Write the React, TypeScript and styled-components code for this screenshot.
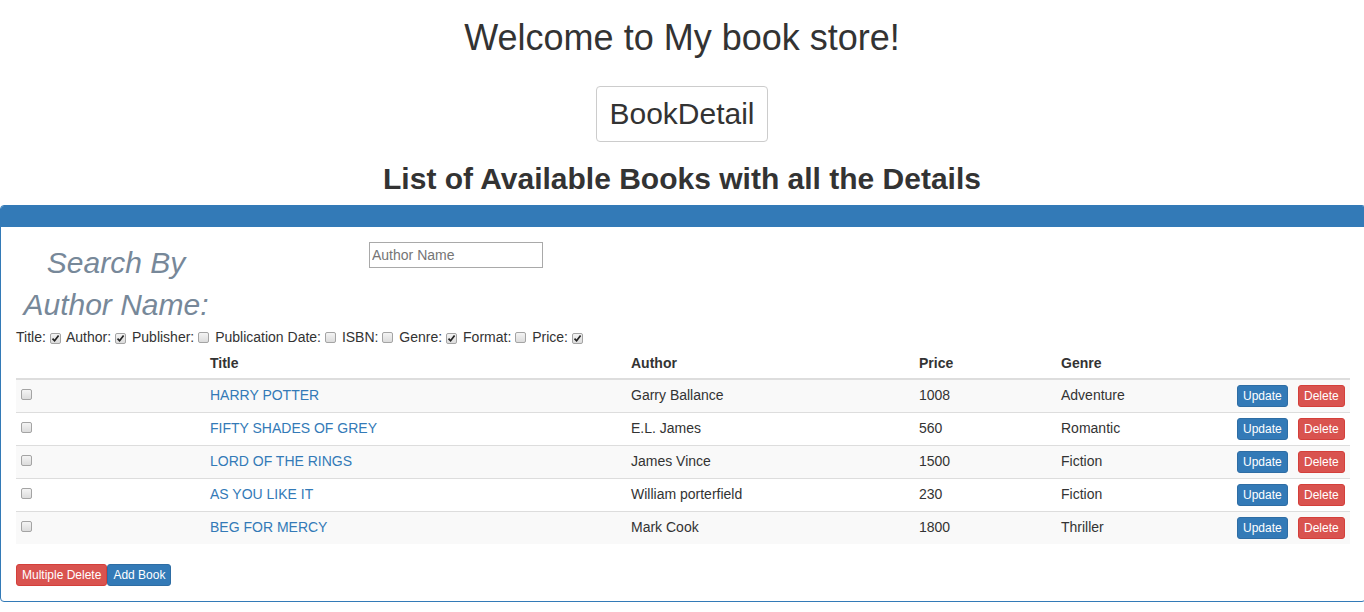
import styled, { createGlobalStyle } from 'styled-components';

const GlobalStyle = createGlobalStyle`
  html, body {
    margin: 0;
    padding: 0;
    overflow-x: hidden;
    background: #fff;
  }
  body {
    font-family: "Liberation Sans", Arial, Helvetica, sans-serif;
    font-size: 14px;
    line-height: 1.42857;
    color: #333;
  }
  * {
    box-sizing: border-box;
  }
`;

const Page = styled.div`
  text-align: center;
`;

const Heading = styled.h1`
  font-size: 36px;
  font-weight: 400;
  line-height: 1.1;
  margin: 18px 0 28px;
`;

const DetailButton = styled.button`
  font-family: inherit;
  font-size: 30px;
  line-height: 34px;
  padding: 10px 12px;
  color: #333;
  background: #fff;
  border: 1px solid #ccc;
  border-radius: 4px;
  cursor: pointer;
`;

const SubHeading = styled.h2`
  font-size: 30px;
  font-weight: 700;
  line-height: 1.1;
  margin: 20px 0 10px;
`;

const Panel = styled.div`
  text-align: left;
  margin: 0 -2px 20px 0;
  border: 1px solid #337ab7;
  border-radius: 4px;
`;

const PanelHeading = styled.div`
  height: 21px;
  background: #337ab7;
  border-bottom: 1px solid #337ab7;
  border-radius: 3px 3px 0 0;
`;

const PanelBody = styled.div`
  padding: 15px;
`;

const SearchRow = styled.div`
  display: flex;
  align-items: flex-start;
`;

const SearchLabel = styled.label`
  width: 200px;
  text-align: center;
  font-size: 30px;
  font-style: italic;
  line-height: 42.8px;
  color: #778899;
`;

const SearchInput = styled.input`
  margin-left: 153px;
  width: 174px;
  height: 26px;
  padding: 1px 2px;
  font-family: inherit;
  font-size: 14px;
  color: #333;
  border: 1px solid #a9a9a9;
  border-radius: 0;
  outline: none;

  &::placeholder {
    color: #757575;
  }
`;

const FilterRow = styled.div`
  line-height: 20px;
  white-space: nowrap;
`;

const Box = styled.span<{ $inTable?: boolean }>`
  display: inline-flex;
  align-items: center;
  justify-content: center;
  width: 11px;
  height: 11px;
  margin: ${({ $inTable }) => ($inTable ? '4px 0 0 0' : '0 2px 0 4px')};
  vertical-align: ${({ $inTable }) => ($inTable ? 'top' : '-1px')};
  border: 1px solid #a4a4a4;
  border-radius: 2px;
  background: linear-gradient(#f4f4f4, #dcdcdc);
`;

const Table = styled.table`
  width: 100%;
  table-layout: fixed;
  border-collapse: collapse;
  border-spacing: 0;
  margin: 1px 0 20px;
`;

const Th = styled.th`
  text-align: left;
  font-weight: 700;
  padding: 5px;
  line-height: 20px;
  vertical-align: bottom;
  border-bottom: 2px solid #ddd;
`;

const Row = styled.tr`
  &:nth-child(odd) {
    background: #f9f9f9;
  }
`;

const Td = styled.td`
  padding: 5px;
  line-height: 20px;
  vertical-align: top;
  border-top: 1px solid #ddd;
`;

const TitleLink = styled.a`
  color: #337ab7;
  text-decoration: none;
`;

const SmallButton = styled.button<{ $variant: 'primary' | 'danger'; $block?: boolean }>`
  display: ${({ $block }) => ($block ? 'block' : 'inline-block')};
  font-family: inherit;
  font-size: 12px;
  line-height: 18px;
  padding: 1px 5px;
  border-radius: 3px;
  color: #fff;
  cursor: pointer;
  vertical-align: top;
  background: ${({ $variant }) => ($variant === 'primary' ? '#337ab7' : '#d9534f')};
  border: 1px solid ${({ $variant }) => ($variant === 'primary' ? '#2e6da4' : '#d43f3a')};
`;

const Footer = styled.div`
  display: flex;
  height: 22px;
`;

function Checkbox({ checked, inTable }: { checked?: boolean; inTable?: boolean }) {
  return (
    <Box $inTable={inTable}>
      {checked && (
        <svg width="9" height="9" viewBox="0 0 9 9">
          <path d="M1.5 4.6 L3.6 6.8 L7.6 1.6" fill="none" stroke="#222" strokeWidth="1.7" />
        </svg>
      )}
    </Box>
  );
}

const filters = [
  { label: 'Title:', checked: true },
  { label: 'Author:', checked: true },
  { label: 'Publisher:', checked: false },
  { label: 'Publication Date:', checked: false },
  { label: 'ISBN:', checked: false },
  { label: 'Genre:', checked: true },
  { label: 'Format:', checked: false },
  { label: 'Price:', checked: true },
];

const books = [
  { title: 'HARRY POTTER', author: 'Garry Ballance', price: 1008, genre: 'Adventure' },
  { title: 'FIFTY SHADES OF GREY', author: 'E.L. James', price: 560, genre: 'Romantic' },
  { title: 'LORD OF THE RINGS', author: 'James Vince', price: 1500, genre: 'Fiction' },
  { title: 'AS YOU LIKE IT', author: 'William porterfield', price: 230, genre: 'Fiction' },
  { title: 'BEG FOR MERCY', author: 'Mark Cook', price: 1800, genre: 'Thriller' },
];

export default function App() {
  return (
    <Page>
      <GlobalStyle />
      <Heading>Welcome to My book store!</Heading>
      <DetailButton>BookDetail</DetailButton>
      <SubHeading>List of Available Books with all the Details</SubHeading>

      <Panel>
        <PanelHeading />
        <PanelBody>
          <SearchRow>
            <SearchLabel>Search By Author Name:</SearchLabel>
            <SearchInput placeholder="Author Name" />
          </SearchRow>

          <FilterRow>
            {filters.map((f) => (
              <span key={f.label}>
                {f.label}
                <Checkbox checked={f.checked} />{' '}
              </span>
            ))}
          </FilterRow>

          <Table>
            <colgroup>
              <col style={{ width: 189 }} />
              <col style={{ width: 421 }} />
              <col style={{ width: 288 }} />
              <col style={{ width: 142 }} />
              <col style={{ width: 176 }} />
              <col style={{ width: 61 }} />
              <col style={{ width: 57 }} />
            </colgroup>
            <thead>
              <tr>
                <Th />
                <Th>Title</Th>
                <Th>Author</Th>
                <Th>Price</Th>
                <Th>Genre</Th>
                <Th />
                <Th />
              </tr>
            </thead>
            <tbody>
              {books.map((b) => (
                <Row key={b.title}>
                  <Td>
                    <Checkbox inTable />
                  </Td>
                  <Td>
                    <TitleLink href="#">{b.title}</TitleLink>
                  </Td>
                  <Td>{b.author}</Td>
                  <Td>{b.price}</Td>
                  <Td>{b.genre}</Td>
                  <Td>
                    <SmallButton $variant="primary" $block>Update</SmallButton>
                  </Td>
                  <Td>
                    <SmallButton $variant="danger" $block>Delete</SmallButton>
                  </Td>
                </Row>
              ))}
            </tbody>
          </Table>

          <Footer>
            <SmallButton $variant="danger">Multiple Delete</SmallButton>
            <SmallButton $variant="primary">Add Book</SmallButton>
          </Footer>
        </PanelBody>
      </Panel>
    </Page>
  );
}
